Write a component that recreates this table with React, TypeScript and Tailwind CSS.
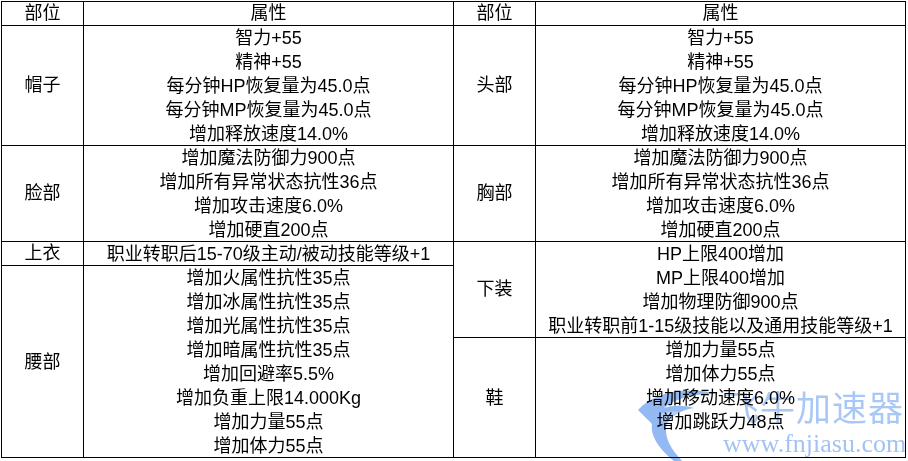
import React from "react";

type Part = { name: string; lines: string[]; h: string };

const LEFT: Part[] = [
  {
    name: "帽子",
    h: "h-[120px]",
    lines: ["智力+55", "精神+55", "每分钟HP恢复量为45.0点", "每分钟MP恢复量为45.0点", "增加释放速度14.0%"],
  },
  {
    name: "脸部",
    h: "h-[96px]",
    lines: ["增加魔法防御力900点", "增加所有异常状态抗性36点", "增加攻击速度6.0%", "增加硬直200点"],
  },
  { name: "上衣", h: "h-[24px]", lines: ["职业转职后15-70级主动/被动技能等级+1"] },
  {
    name: "腰部",
    h: "flex-1",
    lines: [
      "增加火属性抗性35点",
      "增加冰属性抗性35点",
      "增加光属性抗性35点",
      "增加暗属性抗性35点",
      "增加回避率5.5%",
      "增加负重上限14.000Kg",
      "增加力量55点",
      "增加体力55点",
    ],
  },
];

const RIGHT: Part[] = [
  {
    name: "头部",
    h: "h-[120px]",
    lines: ["智力+55", "精神+55", "每分钟HP恢复量为45.0点", "每分钟MP恢复量为45.0点", "增加释放速度14.0%"],
  },
  {
    name: "胸部",
    h: "h-[96px]",
    lines: ["增加魔法防御力900点", "增加所有异常状态抗性36点", "增加攻击速度6.0%", "增加硬直200点"],
  },
  {
    name: "下装",
    h: "h-[96px]",
    lines: ["HP上限400增加", "MP上限400增加", "增加物理防御900点", "职业转职前1-15级技能以及通用技能等级+1"],
  },
  {
    name: "鞋",
    h: "flex-1",
    lines: ["增加力量55点", "增加体力55点", "增加移动速度6.0%", "增加跳跃力48点", ""],
  },
];

function Half({ parts, className }: { parts: Part[]; className: string }) {
  return (
    <div className={`flex flex-col ${className}`}>
      <div className="flex h-6 border-b border-black">
        <div className="flex w-[82px] items-center justify-center border-r border-black">部位</div>
        <div className="flex flex-1 items-center justify-center">属性</div>
      </div>
      {parts.map((p, i) => (
        <div
          key={p.name}
          className={`flex ${p.h} ${i < parts.length - 1 ? "border-b border-black" : ""}`}
        >
          <div className="flex w-[82px] items-center justify-center border-r border-black">{p.name}</div>
          <div className="flex flex-1 flex-col items-center justify-center overflow-hidden">
            {p.lines.map((l, j) => (
              <div key={j} className="h-6 shrink-0 whitespace-nowrap leading-6">
                {l}
              </div>
            ))}
          </div>
        </div>
      ))}
    </div>
  );
}

// faint site watermark in the bottom right corner
function Watermark() {
  return (
    <div className="pointer-events-none absolute left-[636px] top-[384px] h-[77px] w-[272px] mix-blend-multiply">
      <svg className="absolute left-0 top-0" width="84" height="77" viewBox="0 0 84 77">
        <path
          d="M2 26 C 18 8, 50 2, 82 10 C 60 9, 40 14, 28 24 C 36 21, 48 21, 58 24 C 42 27, 30 34, 30 46 C 30 58, 38 68, 46 77 L 38 77 C 24 66, 14 52, 16 40 C 10 34, 6 30, 2 26 Z"
          fill="#86b1f0"
          opacity="0.9"
        />
        <path d="M24 30 C 30 27, 38 27, 44 28 C 36 31, 30 34, 26 38 Z" fill="#b7d0f6" />
      </svg>
      <div className="absolute left-[88px] top-[4px] whitespace-nowrap text-[35px] leading-[36px] tracking-[1px] text-[#a9c8f5] [font-family:'Noto_Sans_CJK_SC',sans-serif]">
        飞牛加速器
      </div>
      <div className="absolute left-[87px] top-[46px] whitespace-nowrap text-[26px] leading-[28px] text-[#a3c3f2] [font-family:'Liberation_Serif',serif]">
        www.fnjiasu.com
      </div>
    </div>
  );
}

export default function App() {
  return (
    <div className="relative h-[461px] w-[908px] overflow-hidden bg-white pl-px pt-px text-[18px] text-black [font-family:'Liberation_Sans','Noto_Sans_CJK_SC',sans-serif]">
      <div className="flex h-[457px] w-[905px] border border-black">
        <Half parts={LEFT} className="w-[452px] border-r border-black" />
        <Half parts={RIGHT} className="flex-1" />
      </div>
      <Watermark />
    </div>
  );
}
